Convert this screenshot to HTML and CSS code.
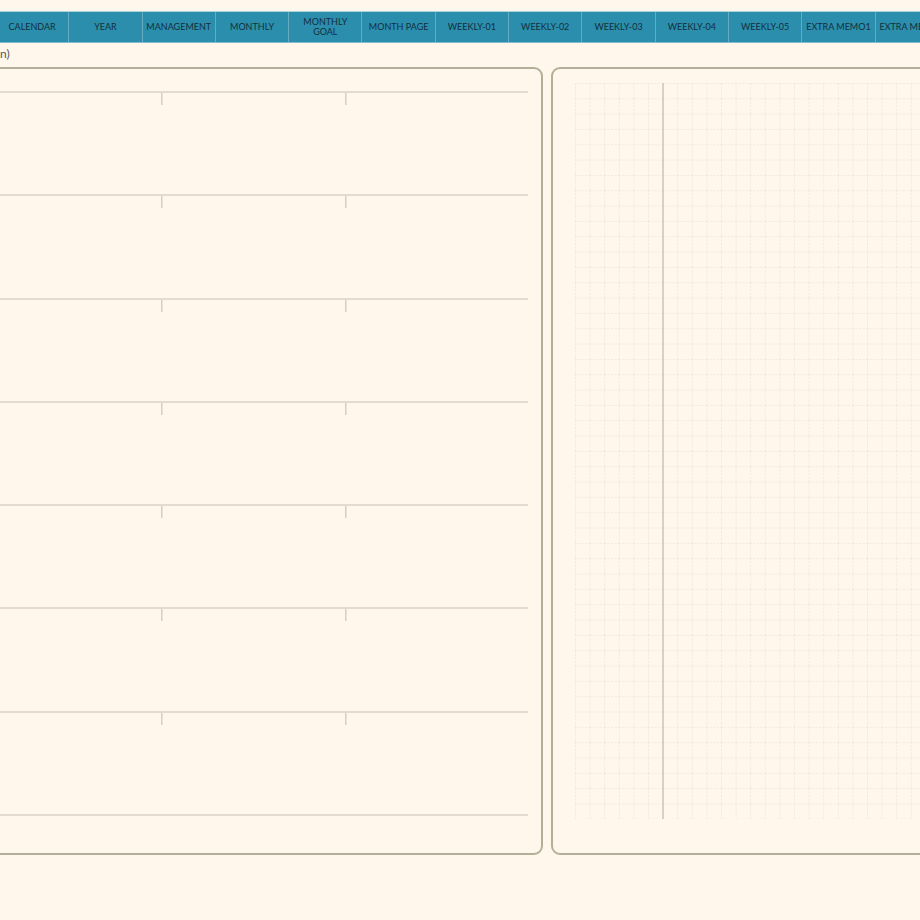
FILE: index.html
```html
<!DOCTYPE html>
<html lang="en">
<head>
    <meta charset="UTF-8">
    <meta name="viewport" content="width=device-width, initial-scale=1.0">
    <title>Monthly Planner</title>
    <link rel="stylesheet" href="styles.css">
</head>
<body>
    <nav class="tabs">
        <a class="tab">CALENDAR</a>
        <a class="tab">YEAR</a>
        <a class="tab">MANAGEMENT</a>
        <a class="tab">MONTHLY</a>
        <a class="tab">MONTHLY<br>GOAL</a>
        <a class="tab">MONTH PAGE</a>
        <a class="tab">WEEKLY-01</a>
        <a class="tab">WEEKLY-02</a>
        <a class="tab">WEEKLY-03</a>
        <a class="tab">WEEKLY-04</a>
        <a class="tab">WEEKLY-05</a>
        <a class="tab">EXTRA MEMO1</a>
        <a class="tab">EXTRA MEMO2</a>
    </nav>

    <div class="page-label">n)</div>

    <div class="spread">
        <section class="sheet sheet-left">
            <div class="rows">
                <div class="row"><span></span><span class="tick"></span><span class="tick"></span></div>
                <div class="row"><span></span><span class="tick"></span><span class="tick"></span></div>
                <div class="row"><span></span><span class="tick"></span><span class="tick"></span></div>
                <div class="row"><span></span><span class="tick"></span><span class="tick"></span></div>
                <div class="row"><span></span><span class="tick"></span><span class="tick"></span></div>
                <div class="row"><span></span><span class="tick"></span><span class="tick"></span></div>
                <div class="row"><span></span><span class="tick"></span><span class="tick"></span></div>
            </div>
        </section>

        <section class="sheet sheet-right">
            <svg class="grid" width="360" height="737" viewBox="0 0 360 737">
                <defs>
                    <pattern id="cell" width="14.6" height="15.33" patternUnits="userSpaceOnUse">
                        <path d="M0.5 0V15.33" stroke="#f2e9dc" stroke-width="1" stroke-dasharray="2 1.4"/>
                        <path d="M0 0.5H14.6" stroke="#f2e9dc" stroke-width="1" stroke-dasharray="2 1.4"/>
                    </pattern>
                </defs>
                <rect width="360" height="736" fill="url(#cell)"/>
                <!-- margin line -->
                <path d="M88 0V736" stroke="#cbc4ba" stroke-width="1.5"/>
            </svg>
        </section>
    </div>
</body>
</html>
```

FILE: styles.css
```css
body {
    margin: 0;
    background-color: #fff7eb;
    font-family: Lato, "Liberation Sans", sans-serif;
    width: 920px;
    height: 920px;
    overflow: hidden;
}

.tabs {
    display: flex;
    margin: 11px 0 0 -4px;
    height: 30px;
    border-top: 1px solid #a9d1dc;
    border-bottom: 1px solid #7fbccd;
    background-color: #2b8ead;
}

.tab {
    flex: 0 0 73.3px;
    box-sizing: border-box;
    display: flex;
    align-items: center;
    justify-content: center;
    text-align: center;
    border-right: 1px solid #62abc2;
    color: #132f3b;
    font-size: 9px;
    line-height: 10px;
    white-space: nowrap;
    overflow: hidden;
}

.page-label {
    height: 24px;
    font-size: 12px;
    line-height: 22px;
    color: #5a5650;
}

.spread {
    display: flex;
    gap: 8px;
    margin-left: -20px;
}

.sheet {
    box-sizing: border-box;
    height: 788px;
    border: 2px solid #b3af98;
    border-radius: 9px;
    flex: none;
}

.sheet-left {
    width: 563px;
    padding: 22px 13px 0 0;
}

.rows {
    border-bottom: 2px solid #e3dbd0;
}

.row {
    display: grid;
    grid-template-columns: 179px 184px 1fr;
    height: 103.3px;
    box-sizing: border-box;
    border-top: 2px solid #e3dbd0;
}

.tick {
    background: linear-gradient(#d5cec5, #d5cec5) no-repeat 0 0 / 1.5px 12px;
}

.sheet-right {
    width: 420px;
    padding: 14px 0 0 22px;
    overflow: hidden;
}

.grid {
    display: block;
}
```
